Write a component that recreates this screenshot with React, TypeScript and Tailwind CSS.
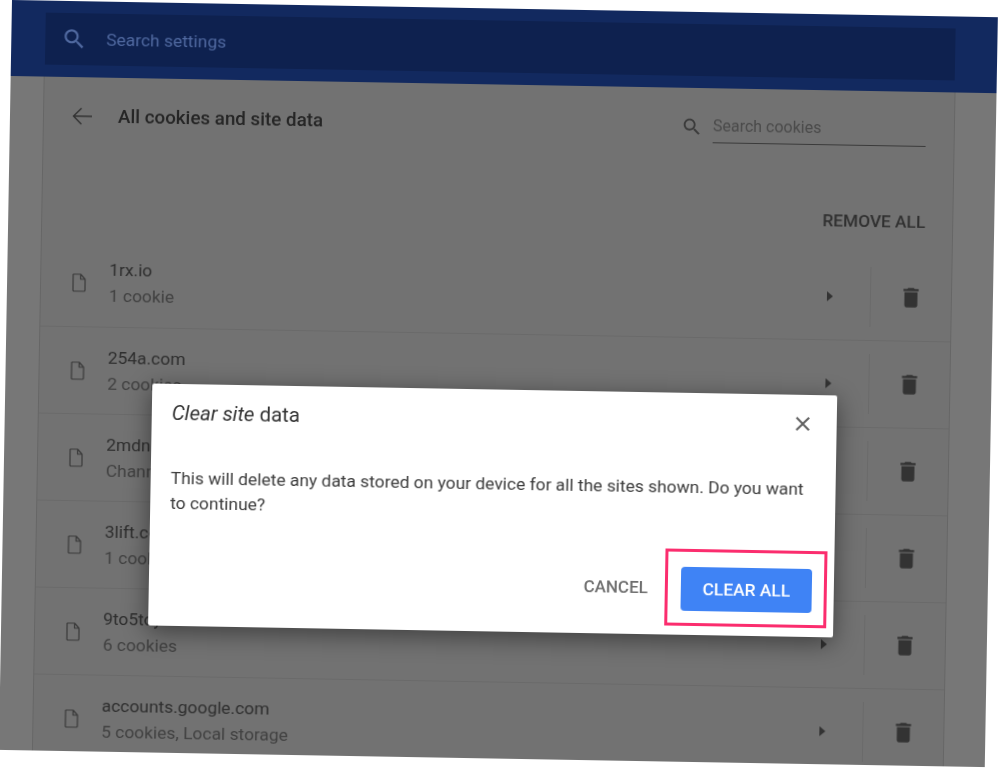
import React from "react";

const font = { fontFamily: "Roboto, sans-serif" };

function SearchIcon({ className }: { className: string }) {
  return (
    <svg viewBox="0 0 24 24" className={className} fill="currentColor">
      <path d="M15.5 14h-.79l-.28-.27C15.41 12.59 16 11.11 16 9.5 16 5.91 13.09 3 9.5 3S3 5.91 3 9.5 5.91 16 9.5 16c1.61 0 3.09-.59 4.23-1.57l.27.28v.79l5 4.99L20.49 19l-4.99-5zm-6 0C7.01 14 5 11.99 5 9.5S7.01 5 9.5 5 14 7.01 14 9.5 11.99 14 9.5 14z" />
    </svg>
  );
}

function Row({ title, sub, first }: { title: string; sub: string; first?: boolean }) {
  return (
    <div className={`flex h-[87px] shrink-0 items-center ${first ? "" : "border-t border-[#6a6a6a]"}`}>
      <div className="flex w-[68px] shrink-0 justify-center pl-[7px]">
        <svg viewBox="0 0 14 19" className="h-[19px] w-[14px] text-[#3a3a3a]" fill="none" stroke="currentColor" strokeWidth="1.2" strokeLinejoin="round">
          <path d="M1.5 1h7l4.5 5v11a1 1 0 0 1-1 1H2a1 1 0 0 1-1-1V1.5zM8.5 1v5H13" />
        </svg>
      </div>
      <div className="flex min-w-0 flex-1 flex-col gap-[7px] text-[17.4px] leading-[19px]">
        <span className="text-[#2e2e2e]">{title}</span>
        <span className="text-[#414141]">{sub}</span>
      </div>
      <svg viewBox="0 0 6 10" className="mr-[37px] h-[10px] w-[6px] text-[#333333]" fill="currentColor">
        <path d="M0 0l6 5-6 5z" />
      </svg>
      <div className="flex h-[60px] w-[81px] shrink-0 items-center justify-center border-l border-[#6a6a6a]">
        <svg viewBox="0 0 24 24" className="h-[26px] w-[26px] text-[#333333]" fill="currentColor">
          <path d="M6 19c0 1.1.9 2 2 2h8c1.1 0 2-.9 2-2V7H6v12zM19 4h-3.5l-1-1h-5l-1 1H5v2h14V4z" />
        </svg>
      </div>
    </div>
  );
}

export default function App() {
  return (
    <div className="h-[771px] w-[1000px] overflow-hidden bg-white" style={font}>
      <div className="relative ml-[12px] flex h-[750px] w-[986px] origin-top-left rotate-[1deg] flex-col overflow-hidden bg-[#777777] blur-[0.5px]">
        <header className="h-[76px] shrink-0 bg-[#12295f] px-[34px] pt-[12px]">
          <div className="flex h-[52px] w-[910px] items-center bg-[#0e214f] pl-[16px] text-[#5069a0]">
            <SearchIcon className="h-[26px] w-[26px]" />
            <span className="ml-[19px] text-[17.4px]">Search settings</span>
          </div>
        </header>

        <main className="ml-[33px] flex min-h-0 w-[912px] flex-1 flex-col border-x border-[#666666] bg-[#727272]">
          <div className="flex h-[80px] shrink-0 items-center pl-[28px] pr-[28px]">
            <svg viewBox="0 0 20 18" className="mb-[3px] h-[18px] w-[20px] text-[#333333]" fill="none" stroke="currentColor" strokeWidth="1.4">
              <path d="M20 9H1.5M9.5 1L1.5 9l8 8" />
            </svg>
            <span className="mb-[2px] ml-[26px] flex-1 text-[18.8px] font-medium text-[#252525]">All cookies and site data</span>
            <SearchIcon className="mb-[2px] h-[22px] w-[22px] text-[#3a3a3a]" />
            <div className="ml-[10px] mt-[1px] h-[29px] w-[213px] border-b border-[#3a3a3a] text-[16px] leading-[24px] text-[#4a4a4a]">
              Search cookies
            </div>
          </div>
          <div className="flex h-[82px] shrink-0 items-center justify-end pr-[27px] pt-[20px] text-[17.3px] font-medium text-[#303030]">
            REMOVE ALL
          </div>
          <Row first title="1rx.io" sub="1 cookie" />
          <Row title="254a.com" sub="2 cookies" />
          <Row title="2mdn.net" sub="Channel ID" />
          <Row title="3lift.com" sub="1 cookie" />
          <Row title="9to5toys.com" sub="6 cookies" />
          <Row title="accounts.google.com" sub="5 cookies, Local storage" />
        </main>

        <div className="absolute left-[147px] top-[381px] flex h-[242px] w-[685px] flex-col rounded-[2px] bg-white shadow-[0_6px_24px_rgba(0,0,0,0.45)]">
          <div className="flex h-[58px] shrink-0 items-center justify-between pl-[20px] pr-[22px]">
            <span className="text-[20.4px] text-[#333333]"><em>Clear site</em> data</span>
            <svg viewBox="0 0 24 24" className="h-[24px] w-[24px] text-[#5f5f5f]" fill="currentColor">
              <path d="M19 6.41L17.59 5 12 10.59 6.41 5 5 6.41 10.59 12 5 17.59 6.41 19 12 13.41 17.59 19 19 17.59 13.41 12z" />
            </svg>
          </div>
          <p className="mt-[24px] pl-[20px] pr-[20px] text-[17.4px] leading-[25px] text-[#3c3c3c]">
            This will delete any data stored on your device for all the sites shown. Do you want to continue?
          </p>
          <div className="mt-auto flex items-center justify-end gap-[33px] pb-[24px] pr-[22px]">
            <span className="text-[17px] font-medium text-[#6e6e6e]">CANCEL</span>
            <div className="flex h-[44px] w-[131px] items-center justify-center rounded-[4px] bg-[#3f83f5] text-[17.4px] font-medium text-white">
              CLEAR ALL
            </div>
          </div>
          <div className="absolute left-[516px] top-[156px] h-[77px] w-[162px] border-[3px] border-[#fb2d6e]" />
        </div>
      </div>
    </div>
  );
}
